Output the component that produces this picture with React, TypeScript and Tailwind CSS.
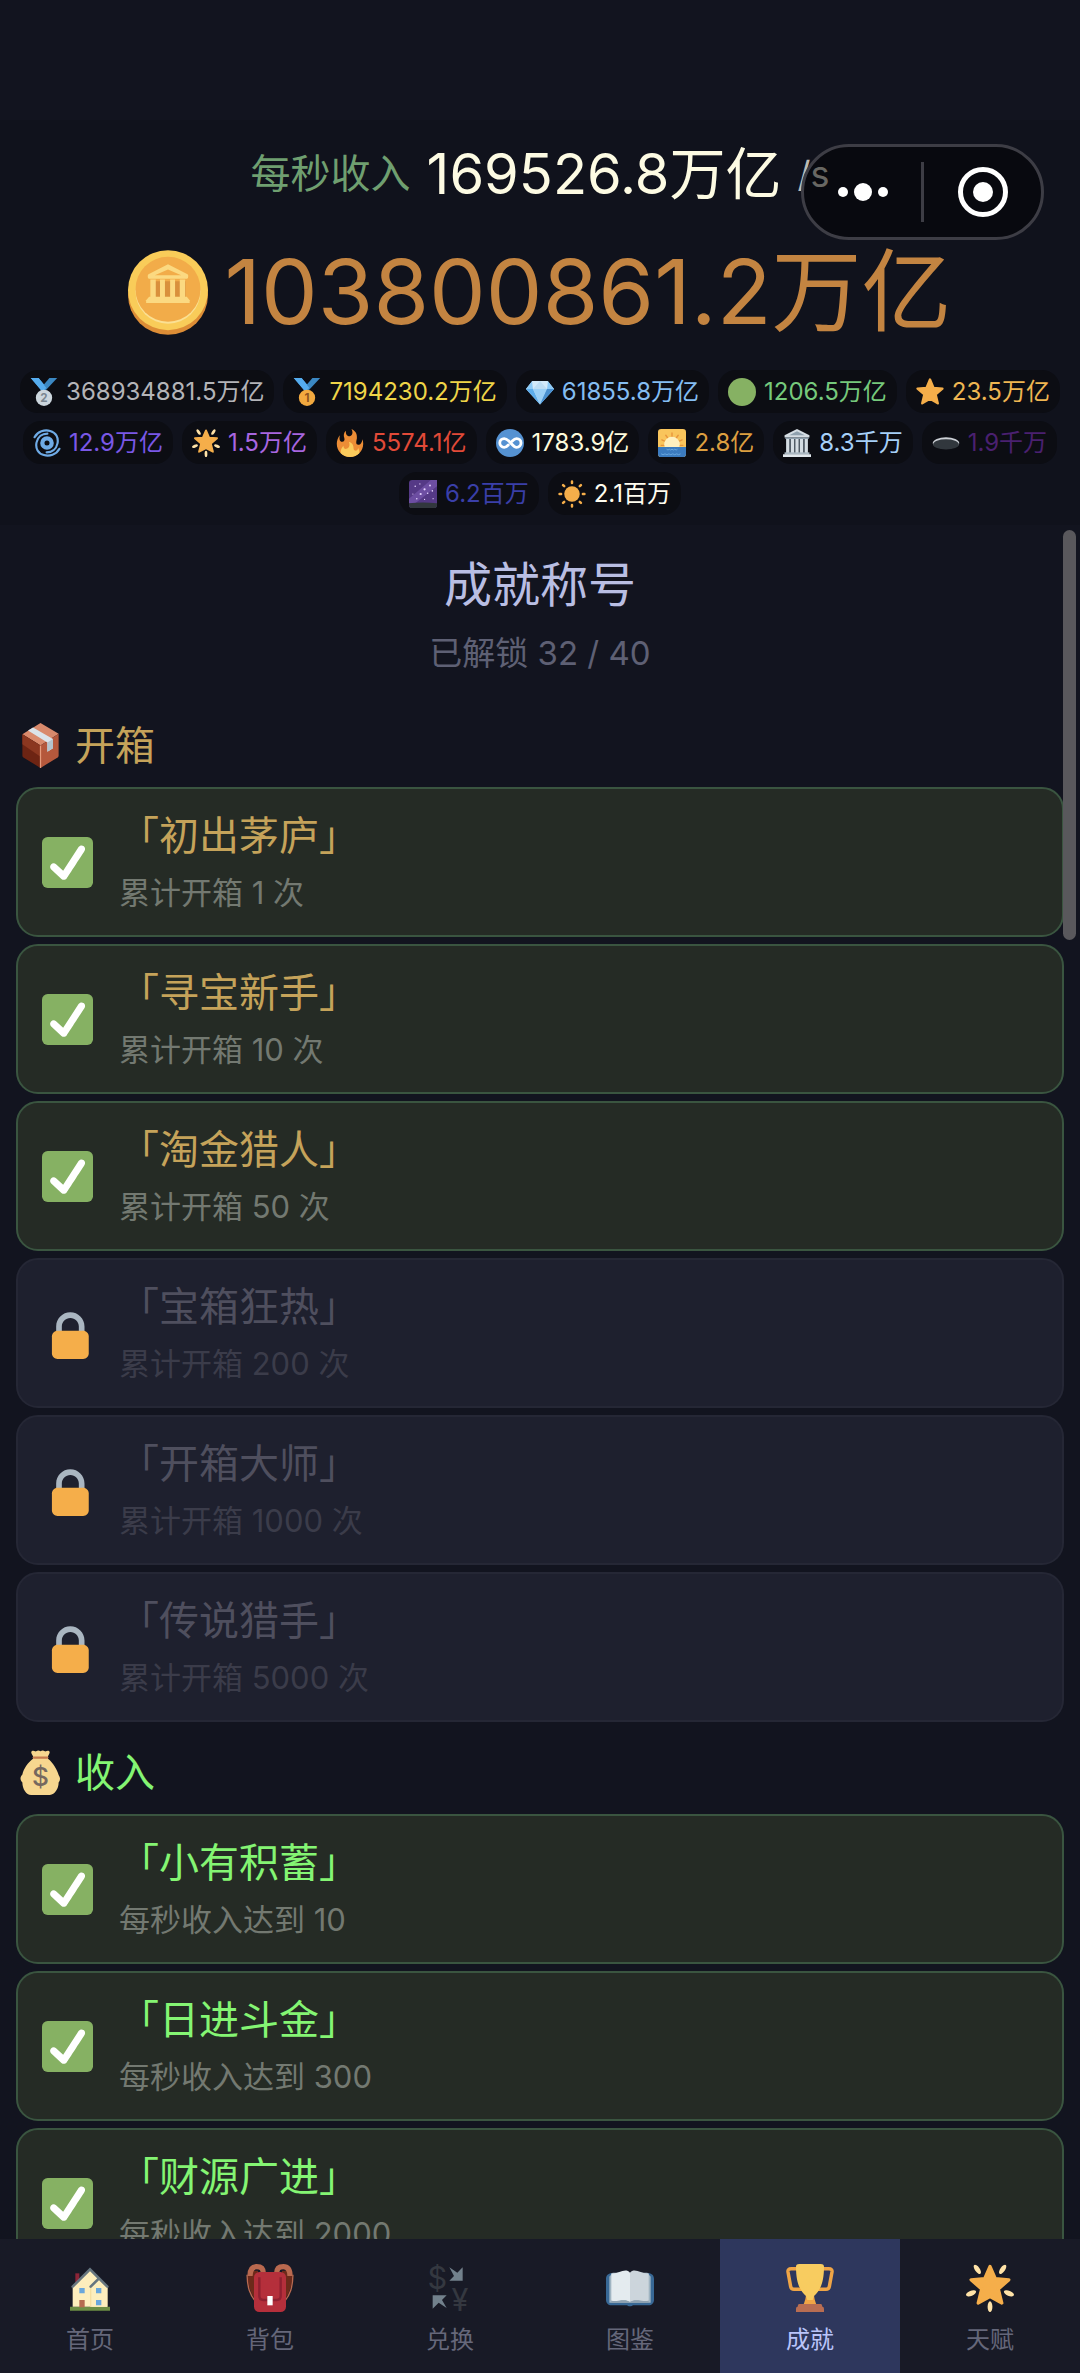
import React, { useState } from "react";

type IconName =
  | "silver"
  | "gold"
  | "gem"
  | "green"
  | "star"
  | "cyclone"
  | "glow"
  | "fire"
  | "infinity"
  | "sunrise"
  | "temple"
  | "hole"
  | "galaxy"
  | "sun"
  | "coin"
  | "check"
  | "lock"
  | "box"
  | "bag"
  | "house"
  | "backpack"
  | "exchange"
  | "book"
  | "trophy";

const STAR = "M18 2 L22.4 12.6 L34 13.6 L25.3 21.2 L28 32.6 L18 26.6 L8 32.6 L10.7 21.2 L2 13.6 L13.6 12.6 Z";

const medal = (fill: string, ink: string, label: string) => (
  <>
    <path fill="#55acee" d="M1 0h10l11 13-6 5z" />
    <path fill="#3b88c3" d="M35 0H25L14 13l5 4z" />
    <path fill="#55acee" d="M1 0h10l10 13-5 4z" />
    <circle cx="18" cy="25.500" r="10.500" fill={fill} />
    <text
      x="18"
      y="31"
      textAnchor="middle"
      fontSize="15"
      fontWeight="700"
      fontFamily="Inter, sans-serif"
      fill={ink}
    >
      {label}
    </text>
  </>
);

const icons: Record<IconName, React.ReactNode> = {
  silver: medal("#ccd6dd", "#7b8791", "2"),
  gold: medal("#f2a93f", "#8f5320", "1"),
  gem: (
    <>
      <path fill="#bdddf4" d="M8 4h20l8 10-18 20L0 14z" />
      <path fill="#8ccaf7" d="M8 4l-8 10h9zM28 4l8 10h-9z" />
      <path fill="#5dadec" d="M0 14h9l9 20zM36 14h-9l-9 20z" />
      <path fill="#9bd0f7" d="M9 14h18l-9 20z" />
      <path fill="#d3eafa" d="M8 4l10 0-9 10zM28 4H18l9 10z" />
      <path fill="#4a90d0" d="M27 14h9L18 34z" />
    </>
  ),
  green: <circle cx="18" cy="18" r="18" fill="#86b163" />,
  star: <path d={STAR} fill="#f5ae4a" stroke="#f5ae4a" strokeWidth="3" strokeLinejoin="round" />,
  cyclone: (
    <g fill="none" stroke="#6fabe6" strokeLinecap="round">
      <circle cx="18" cy="18" r="6" strokeWidth="5.500" />
      <path strokeWidth="2.800" d="M2 10.500C6 3 15 .500 22 2.500 29.500 4.500 33 11 31.500 18.500 30 26 24 30 17.500 30" />
      <path strokeWidth="2.800" d="M34 25.500C30 33 21 35.500 14 33.500 6.500 31.500 3 25 4.500 17.500 6 10 12 6 18.500 6" />
    </g>
  ),
  glow: (
    <>
      <path
        d="M18 1.800l4 9.200 10.200.800-7.900 7 2.600 10.500L18 24.500l-8.900 4.800 2.600-10.500-7.900-7L14 11z"
        fill="#f5ae4a"
        stroke="#f5ae4a"
        strokeWidth="2.400"
        strokeLinejoin="round"
      />
      <g fill="#ffe3a8">
        <ellipse cx="8.500" cy="4" rx="1.800" ry="4" transform="rotate(-35 8.500 4)" />
        <ellipse cx="27.500" cy="4" rx="1.800" ry="4" transform="rotate(35 27.500 4)" />
        <ellipse cx="3.800" cy="22" rx="1.900" ry="4" transform="rotate(68 3.800 22)" />
        <ellipse cx="32.200" cy="22" rx="1.900" ry="4" transform="rotate(-68 32.200 22)" />
        <ellipse cx="18" cy="32" rx="1.800" ry="4" />
      </g>
    </>
  ),
  fire: (
    <>
      <path
        fill="#ec8d36"
        d="M35 19c0-2.062-.367-4.039-1.040-5.868-.460 5.389-3.333 8.157-6.335 6.868-2.812-1.208-.917-5.917-.777-8.164.236-3.809-.012-8.169-6.931-11.794 2.875 5.500.333 8.917-2.333 9.125-2.958.231-5.667-2.542-4.667-7.042-3.238 2.386-3.332 6.402-2.333 9 1.042 2.708-.042 4.958-2.583 5.208-2.840.280-4.418-3.041-2.963-8.333C2.520 10.965 1 14.805 1 19c0 9.389 7.611 17 17 17s17-7.611 17-17z"
      />
      <path
        fill="#fbcb5c"
        d="M28.394 23.999c.148 3.084-2.561 4.293-4.019 3.709-2.106-.843-1.541-2.291-2.083-5.291s-2.625-5.083-5.708-6c2.250 6.333-1.247 8.667-3.080 9.084-1.872.426-3.753-.001-3.968-4.007C7.352 23.668 6 26.676 6 30c0 .368.023.730.055 1.090C9.125 34.124 13.342 36 18 36s8.875-1.876 11.945-4.910c.032-.360.055-.722.055-1.090 0-2.187-.584-4.236-1.606-6.001z"
      />
    </>
  ),
  infinity: (
    <>
      <circle cx="18" cy="18" r="18" fill="#5592d2" />
      <path
        fill="none"
        stroke="#fff"
        strokeWidth="3.600"
        strokeLinecap="round"
        d="M21 15.500c1.800-2 3.500-3.200 5.500-3.200a5.600 5.600 0 0 1 0 11.300c-5.500 0-9.500-11.300-16-11.300a5.600 5.600 0 0 0 0 11.300c2 0 3.700-1.200 5.300-3"
      />
    </>
  ),
  sunrise: (
    <>
      <rect width="36" height="36" rx="4" fill="#f9c55c" />
      <g stroke="#e8963c" strokeWidth="1.800" strokeLinecap="round">
        <path d="M4 21h28M5 14l26 12M10 8l16 22M18 5v20M26 8L10 30M31 14L5 26" />
      </g>
      <circle cx="18" cy="20" r="10" fill="#fff0bf" />
      <path fill="#3b7bbf" d="M0 23h36v9a4 4 0 0 1-4 4H4a4 4 0 0 1-4-4z" />
      <path
        d="M11 26q2 2 3.500 0 2 2 3.500 0 2 2 3.500 0 2 2 3.500 0M4 32q2.500 2 5 0 2.500 2 5 0 2.500 2 5 0 2.500 2 5 0 2.500 2 5 0"
        fill="none"
        stroke="#6ba9e0"
        strokeWidth="1.200"
      />
    </>
  ),
  temple: (
    <>
      <path fill="#4b5560" d="M5 12h26v19H5z" />
      <path fill="#d5dde3" d="M18 0L2 8v3h32V8z" />
      <path fill="#8fa0ad" d="M18 2.800L8 8h20zM3 11h30v2H3z" />
      <path fill="#d5dde3" d="M4 13h4v18H4zM10.200 13h4v18h-4zM16 13h4v18h-4zM21.800 13h4v18h-4zM28 13h4v18h-4z" />
      <path fill="#aab8c2" d="M2 30h32v3H2z" />
      <path fill="#e1e8ed" d="M0 32.500h36V36H0z" />
    </>
  ),
  hole: (
    <>
      <ellipse cx="18" cy="18" rx="17" ry="7.500" fill="#ccd0d6" />
      <ellipse cx="18" cy="19.800" rx="16.500" ry="6.500" fill="#31373d" />
    </>
  ),
  galaxy: (
    <>
      <rect width="36" height="36" rx="4" fill="#553986" />
      <path fill="#6d4ea2" d="M0 24L28 0h8v8L8 30H0z" />
      <path fill="#31373d" d="M0 30q18-2 36 0v2a4 4 0 0 1-4 4H4a4 4 0 0 1-4-4z" />
      <g fill="#e6d3ff">
        <circle cx="8" cy="8" r="1" />
        <circle cx="20" cy="12" r="1.400" />
        <circle cx="15" cy="18" r="1.400" />
        <circle cx="27" cy="7" r="1.200" />
        <circle cx="10" cy="24" r="1" />
        <circle cx="24" cy="17" r="1" />
        <circle cx="30" cy="14" r="1" />
        <circle cx="5" cy="18" r=".8" />
        <circle cx="31" cy="24" r=".8" />
        <circle cx="20" cy="25" r=".8" />
        <circle cx="14" cy="5" r=".8" />
      </g>
    </>
  ),
  sun: (
    <>
      <circle cx="18" cy="18" r="10" fill="#f5ae4a" />
      <path
        stroke="#f5ae4a"
        strokeWidth="3.200"
        strokeLinecap="round"
        d="M18 2v2M18 32v2M2 18h2M32 18h2M6.500 6.500l1.500 1.500M28 28l1.500 1.500M29.500 6.500L28 8M8 28l-1.500 1.500"
      />
    </>
  ),
  coin: (
    <>
      <ellipse cx="17" cy="19" rx="17" ry="17" fill="#dd8d36" />
      <circle cx="17" cy="17" r="17" fill="#f9cc59" />
      <circle cx="17" cy="17.500" r="13.800" fill="#fbe093" />
      <circle cx="17" cy="16.600" r="13.800" fill="#f2ac49" />
      <path fill="#d9903c" d="M10 13.200h14.500v8.500H10z" />
      <path
        fill="#fbd981"
        fillRule="evenodd"
        d="M17 6l8.300 4.200c.5.300.4 2-.4 2H9.100c-.8 0-.9-1.700-.4-2zM17 8.200l-5.600 2.500h11.200z"
      />
      <path fill="#fbd981" d="M9.500 12.500h2.300V20H9.500zM13.600 12.500h2.100V20h-2.100zM17.900 12.500H20V20h-2.100zM22 12.500h2.300V20H22z" />
      <path fill="#fbd981" d="M9 19.800h16l1.200 1.500v1.200H7.700v-1.200z" />
    </>
  ),
  check: (
    <>
      <rect width="36" height="36" rx="4" fill="#86b163" />
      <path
        fill="#fff"
        d="M29.280 6.362c-1.156-.751-2.704-.422-3.458.736L14.936 23.877l-5.029-4.650c-1.014-.938-2.596-.875-3.533.138-.937 1.014-.875 2.596.139 3.533l7.209 6.666c.480.445 1.090.665 1.696.665.673 0 1.534-.282 2.099-1.139.332-.506 12.500-19.270 12.500-19.270.751-1.159.421-2.707-.737-3.458z"
      />
    </>
  ),
  lock: (
    <g transform="translate(2)">
      <path
        fill="#aab6c1"
        d="M18 3C12.477 3 8 7.477 8 13v10h4V13c0-3.313 2.686-6 6-6s6 2.687 6 6v10h4V13c0-5.523-4.477-10-10-10z"
      />
      <path
        fill="#f5ae4a"
        d="M31 32c0 2.209-1.791 4-4 4H9c-2.209 0-4-1.791-4-4V20c0-2.209 1.791-4 4-4h18c2.209 0 4 1.791 4 4v12z"
      />
    </g>
  ),
  box: (
    <>
      <path fill="#d98a6c" d="M18 0l14.500 8.500L18 18 3.500 9z" />
      <path fill="#6d2413" d="M3.500 9L18 18v18L4.300 27.500c-.6-.4-.8-1-.8-1.500z" />
      <path fill="#b5583c" d="M32.500 8.500L18 18v18l13.700-8.500c.6-.4.800-1 .800-1.500z" />
      <path fill="#8b3720" d="M3.500 9L18 18v9L3.500 17z" />
      <path fill="#dbe4ea" d="M12 3.500L8 6l15.500 9.500v7.500l4.500-2.800v-7.400z" />
      <path fill="#b4c3cc" d="M23.500 15.500l4.500-2.700v7.400L23.500 23z" />
      <path stroke="#e59b7d" strokeWidth="1" d="M18 18v18" />
    </>
  ),
  bag: (
    <>
      <path
        fill="#f6d68f"
        d="M11 1c1.500-1 2.500.500 3.500 0s2-1 3.500 0c1.500-1 2.500-.500 3.500 0s2-1 3.500 0c.800.800 0 2.300-1 4v2c4 3 7.500 9 8.500 13 1.500 2 1.500 4 0 6 0 5-3 9.500-7 10H10.500c-4 0-7-5-7-10-2-2-2-4.500 0-6.500C4.500 15 8 10 12 7V5c-1-1.700-2-3.200-1-4z"
      />
      <path fill="none" stroke="#c47a4e" strokeWidth="1.800" strokeLinecap="round" d="M12.500 6h11" />
      <text
        x="18"
        y="29"
        textAnchor="middle"
        fontSize="21"
        fontWeight="500"
        fontFamily="Inter, sans-serif"
        fill="#75685f"
      >
        $
      </text>
    </>
  ),
  house: (
    <>
      <path fill="#6d8f45" d="M3 32h30v3H3z" />
      <path fill="#8c2437" d="M7 7h3v8H7z" />
      <path fill="#fdeebd" d="M18 4.500L31 17v15H5V17z" />
      <path fill="#f6dfa0" d="M24 10.500l7 6.500v15H18V17z" />
      <path fill="#fdeebd" d="M24.500 12l6.500 6v14H19V17z" />
      <path fill="none" stroke="#66757f" strokeWidth="2" strokeLinecap="round" d="M5 17L18 4l13 13M18.500 17l5.500-5.500" />
      <path fill="#6aa7dc" d="M10 18h4v4h-4zM22.500 18h4v4h-4zM22.500 27h4v4h-4z" />
      <path fill="#b56b50" d="M10 27h4v5.500h-4z" />
    </>
  ),
  backpack: (
    <>
      <path fill="#6d2a1a" d="M2 5h7v24C4 24 0 15 2 5zM34 5h-7v24c5-5 9-14 7-24z" />
      <path
        fill="none"
        stroke="#b9694f"
        strokeWidth="4"
        d="M3 9C3 4 5 2 8 2c3 0 5 1 5 5M33 9c0-5-2-7-5-7-3 0-5 1-5 5"
      />
      <path fill="none" stroke="#b9694f" strokeWidth="1" d="M.8 8C1 18 3 23 7 28M35.200 8C35 18 33 23 29 28" />
      <rect x="6" y="6" width="24" height="30" rx="4" fill="#b52f3b" />
      <path
        fill="none"
        stroke="#8f2030"
        strokeWidth="1.800"
        d="M10 10v14c0 2 1 3 3 3h10c2 0 3-1 3-3V10"
      />
      <rect x="16" y="24" width="4" height="7" fill="#fff" />
    </>
  ),
  exchange: (
    <>
      <g fill="#343840" fontFamily="Inter, sans-serif" fontSize="23" textAnchor="middle">
        <text x="8.500" y="19">
          $
        </text>
        <text x="25.500" y="35">
          ¥
        </text>
      </g>
      <path
        fill="#72818c"
        d="M27.500 2.500v10h-10L21 9l-3.500-6.500 6 4zM5 23.500h10.500L12 27l3.500 6-6-4L5 33.500z"
      />
    </>
  ),
  book: (
    <>
      <path
        fill="#386895"
        d="M4 7h28c2.200 0 4 1.800 4 4v16c0 2.200-1.800 4-4 4H20c0 1-4 1-4 0H4c-2.200 0-4-1.800-4-4V11c0-2.200 1.800-4 4-4z"
      />
      <path fill="#9fb4c2" d="M2.500 9.500L5 6.500h26l2.500 3V29H2.500z" />
      <path fill="#e4ebef" d="M4 7c4 1 8-3 12-2 1 .3 2 1 2 2v21.500c-4-3-9 0-14-1z" />
      <path fill="#ccd5dc" d="M32 7c-4 1-8-3-12-2-1 .3-2 1-2 2v21.500c4-3 9 0 14-1z" />
      <path fill="#8ea1b0" d="M4 27.500c5 1 10-2 14 1 4-3 9 0 14-1V29H4z" />
    </>
  ),
  trophy: (
    <>
      <path
        fill="none"
        stroke="#f0a546"
        strokeWidth="2.600"
        strokeLinejoin="round"
        d="M9 3.500H4C2 3.500 1.300 4.500 1.500 6l2 11c.3 1.500 1 2 2.500 2h6M27 3.500h5c2 0 2.700 1 2.500 2.500l-2 11c-.3 1.500-1 2-2.500 2h-6"
      />
      <path fill="#f0a546" d="M15 22h6c0 4 1 6 2 9H13c1-3 2-5 2-9z" />
      <path fill="#f8cc60" d="M7.500 2C7.500 1 8 0 10 0h16c2 0 2.500 1 2.500 2 0 12-3 18-7.500 22l-1 3h-4l-1-3C10.500 20 7.500 14 7.500 2z" />
      <path fill="#b86d52" d="M10 30h16c1 0 1 1 1.300 2 1 0 1.200 1 1.200 2v2h-21v-2c0-1 .2-2 1.200-2 .300-1 .300-2 1.300-2z" />
    </>
  ),
};

const Icon = ({ name, className }: { name: IconName; className?: string }) => (
  <svg viewBox="0 0 36 36" className={className} aria-hidden="true">
    {icons[name]}
  </svg>
);

const currencies: { icon: IconName; amount: string; color: string }[] = [
  { icon: "silver", amount: "368934881.5万亿", color: "text-[#b4b4b8]" },
  { icon: "gold", amount: "7194230.2万亿", color: "text-[#efd548]" },
  { icon: "gem", amount: "61855.8万亿", color: "text-[#84bdf2]" },
  { icon: "green", amount: "1206.5万亿", color: "text-[#76c97c]" },
  { icon: "star", amount: "23.5万亿", color: "text-[#efb652]" },
  { icon: "cyclone", amount: "12.9万亿", color: "text-[#7a58e6]" },
  { icon: "glow", amount: "1.5万亿", color: "text-[#a866e0]" },
  { icon: "fire", amount: "5574.1亿", color: "text-[#e24a38]" },
  { icon: "infinity", amount: "1783.9亿", color: "text-[#fdfbdc]" },
  { icon: "sunrise", amount: "2.8亿", color: "text-[#dc9f40]" },
  { icon: "temple", amount: "8.3千万", color: "text-[#a6d0f8]" },
  { icon: "hole", amount: "1.9千万", color: "text-[#4a2070]" },
  { icon: "galaxy", amount: "6.2百万", color: "text-[#3a3fa8]" },
  { icon: "sun", amount: "2.1百万", color: "text-[#fffdf0]" },
];

const sections: {
  icon: IconName;
  title: string;
  color: string;
  items: { name: string; desc: string; unlocked: boolean }[];
}[] = [
  {
    icon: "box",
    title: "开箱",
    color: "text-[#c5a35a]",
    items: [
      { name: "初出茅庐", desc: "累计开箱 1 次", unlocked: true },
      { name: "寻宝新手", desc: "累计开箱 10 次", unlocked: true },
      { name: "淘金猎人", desc: "累计开箱 50 次", unlocked: true },
      { name: "宝箱狂热", desc: "累计开箱 200 次", unlocked: false },
      { name: "开箱大师", desc: "累计开箱 1000 次", unlocked: false },
      { name: "传说猎手", desc: "累计开箱 5000 次", unlocked: false },
    ],
  },
  {
    icon: "bag",
    title: "收入",
    color: "text-[#84f573]",
    items: [
      { name: "小有积蓄", desc: "每秒收入达到 10", unlocked: true },
      { name: "日进斗金", desc: "每秒收入达到 300", unlocked: true },
      { name: "财源广进", desc: "每秒收入达到 2000", unlocked: true },
    ],
  },
];

const tabs: { icon: IconName; label: string }[] = [
  { icon: "house", label: "首页" },
  { icon: "backpack", label: "背包" },
  { icon: "exchange", label: "兑换" },
  { icon: "book", label: "图鉴" },
  { icon: "trophy", label: "成就" },
  { icon: "glow", label: "天赋" },
];

const Capsule = () => (
  <div className="absolute top-[144px] right-9 flex h-24 w-[243px] items-center rounded-full border-3 border-[#3d3d45] bg-black/45">
    <button aria-label="更多" className="flex flex-1 items-center justify-center gap-[6px]">
      <span className="size-[10px] rounded-full bg-white" />
      <span className="size-[18px] rounded-full bg-white" />
      <span className="size-[10px] rounded-full bg-white" />
    </button>
    <span className="h-[60px] w-[3px] bg-[#3d3d45]" />
    <button aria-label="关闭" className="flex flex-1 items-center justify-center">
      <span className="flex size-[50px] items-center justify-center rounded-full border-5 border-white">
        <span className="size-5 rounded-full bg-white" />
      </span>
    </button>
  </div>
);

const App = () => {
  const [activeTab, setActiveTab] = useState("成就");

  return (
    <div className="relative flex h-screen flex-col bg-[#12141f] pt-[120px] font-['Inter','Noto_Sans_CJK_SC',sans-serif]">
      <header className="bg-[#10121c] px-4 pt-[22px] pb-[10px]">
        <div className="flex h-16 items-center justify-center gap-4 leading-[64px] whitespace-nowrap">
          <span className="text-[40px] text-[#6f9f70]">每秒收入</span>
          <span className="text-[56px] text-[#fdfbe3]">169526.8万亿</span>
          <span className="text-[36px] text-[#bdbcb4]">/s</span>
        </div>
        <div className="mt-10 flex h-[92px] items-center justify-center gap-4 whitespace-nowrap">
          <svg viewBox="0 0 34 36" className="h-[85px] w-20" aria-hidden="true">
            {icons.coin}
          </svg>
          <span className="text-[90px] leading-none text-[#c38441]">103800861.2万亿</span>
        </div>
        <ul className="mt-8 flex flex-wrap justify-center gap-x-[9px] gap-y-2">
          {currencies.map(item => (
            <li
              key={item.icon}
              className="flex h-[43px] items-center gap-2 rounded-[18px] bg-[#0c0d13] px-[10px]"
            >
              <Icon name={item.icon} className="size-7" />
              <span className={`text-2xl ${item.color}`}>{item.amount}</span>
            </li>
          ))}
        </ul>
      </header>
      <Capsule />

      <div className="relative min-h-0 flex-1">
        <main className="h-full overflow-y-auto px-4 [scrollbar-width:none]">
          <div className="pt-8 pb-[18px] text-center">
            <h1 className="text-5xl leading-[56px] text-[#b9bee3]">成就称号</h1>
            <p className="mt-4 text-[33px] leading-[48px] text-[#5e6074]">已解锁 32 / 40</p>
          </div>
          {sections.map(section => (
            <section key={section.title} className="flex flex-col gap-[7px]">
              <h2
                className={`flex h-[85px] items-center gap-3 pt-6 pb-2 pl-0.5 text-[40px] leading-[48px] ${section.color}`}
              >
                <Icon name={section.icon} className="size-[45px]" />
                {section.title}
              </h2>
              {section.items.map(item => (
                <article
                  key={item.name}
                  className={`flex h-[150px] shrink-0 items-center gap-[26px] rounded-[22px] border-2 px-6 ${
                    item.unlocked
                      ? "border-[#3a5540] bg-[#252b25]"
                      : "border-[#252735] bg-[#1e202e]"
                  }`}
                >
                  <Icon name={item.unlocked ? "check" : "lock"} className="size-[51px]" />
                  <div className="pt-0.5">
                    <h3
                      className={`text-[40px] leading-[60px] ${
                        item.unlocked ? section.color : "text-[#4f4f5e]"
                      }`}
                    >
                      「{item.name}」
                    </h3>
                    <p
                      className={`text-[31px] leading-[54px] ${
                        item.unlocked ? "text-[#737971]" : "text-[#3b3c4a]"
                      }`}
                    >
                      {item.desc}
                    </p>
                  </div>
                </article>
              ))}
            </section>
          ))}
        </main>
        <div className="absolute top-[5px] right-1 h-[410px] w-[13px] rounded-full bg-[#59585c]" />
      </div>

      <nav className="flex h-[134px] bg-[#181a26]">
        {tabs.map(tab => (
          <button
            key={tab.label}
            onClick={() => setActiveTab(tab.label)}
            className={`flex flex-1 flex-col items-center gap-3 pt-[25px] text-2xl ${
              activeTab === tab.label ? "bg-[#2e375d] text-[#b9c4fa]" : "text-[#65677a]"
            }`}
          >
            <Icon name={tab.icon} className="size-12" />
            {tab.label}
          </button>
        ))}
      </nav>
    </div>
  );
};

export default App;
